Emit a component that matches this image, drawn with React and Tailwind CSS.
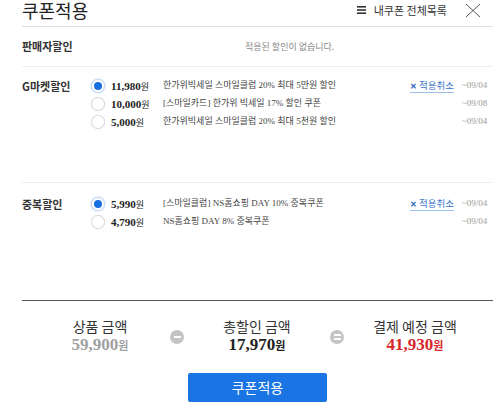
import React from "react";

const sans = "font-['Noto_Sans_CJK_KR','Noto_Sans',sans-serif]";
const serif = "font-['Liberation_Serif','Noto_Sans_CJK_KR',serif]";

const gmarket = [
  { price: "11,980", desc: "한가위빅세일 스마일클럽 20% 최대 5만원 할인", date: "~09/04", checked: true },
  { price: "10,000", desc: "[스마일카드] 한가위 빅세일 17% 할인 쿠폰", date: "~09/08" },
  { price: "5,000", desc: "한가위빅세일 스마일클럽 20% 최대 5천원 할인", date: "~09/04" },
];

const dup = [
  { price: "5,990", desc: "[스마일클럽] NS홈쇼핑 DAY 10% 중복쿠폰", date: "~09/04", checked: true },
  { price: "4,790", desc: "NS홈쇼핑 DAY 8% 중복쿠폰", date: "~09/04" },
];

const Radio = ({ checked }) =>
  checked ? (
    <span className="w-[14px] h-[14px] rounded-full border border-[#c6d6ee] bg-white flex items-center justify-center shadow-[0_0_2px_rgba(26,115,232,0.35)]">
      <span className="w-[8px] h-[8px] rounded-full bg-[#1a6fe0]" />
    </span>
  ) : (
    <span className="w-[14px] h-[14px] rounded-full border border-[#dcdcdc] bg-white shadow-[0_0_1px_rgba(0,0,0,0.15)]" />
  );

const CouponRow = ({ c }) => (
  <div className="flex items-center h-[18px]">
    <Radio checked={c.checked} />
    <span className={`${serif} ml-[6px] w-[52px] shrink-0 text-[11px] font-bold text-[#222] whitespace-nowrap`}>
      {c.price}
      <span className="text-[9px] font-normal">원</span>
    </span>
    <span className={`${serif} w-[247px] shrink-0 text-[9px] text-[#444] whitespace-nowrap`}>{c.desc}</span>
    <span className="w-[52px] shrink-0 flex">
      {c.checked && (
        <span className="text-[9.5px] text-[#3b74c8] border-b border-[#9cc0ec] leading-[13px] whitespace-nowrap flex items-center gap-[2px]">
          <span className="text-[8px] font-bold text-[#2c63c0]">✕</span>적용취소
        </span>
      )}
    </span>
    <span className={`${serif} text-[9px] text-[#999]`}>{c.date}</span>
  </div>
);

const Section = ({ title, list, className }) => (
  <div className={`flex ${className}`}>
    <div className="w-[69px] h-[18px] flex items-center text-[11px] font-bold text-[#333]">{title}</div>
    <div className="flex flex-col">
      {list.map((c, i) => (
        <CouponRow key={i} c={c} />
      ))}
    </div>
  </div>
);

const OpIcon = ({ type }) => (
  <span className="w-[14px] h-[14px] rounded-full bg-[#c4c4c4] flex flex-col items-center justify-center gap-[2px]">
    <span className="w-[7px] h-[2px] bg-white" />
    {type === "eq" && <span className="w-[7px] h-[2px] bg-white" />}
  </span>
);

const Sum = ({ label, value, color }) => (
  <div className="w-[120px] flex flex-col items-center">
    <span className="text-[14px] leading-[18px] text-[#333]">{label}</span>
    <span className={`${serif} text-[17px] leading-[20px] font-bold ${color}`}>
      {value}
      <span className="text-[11px]">원</span>
    </span>
  </div>
);

export default function App() {
  return (
    <div className={`${sans} w-[500px] h-[410px] bg-white overflow-hidden pl-[22px] pr-[7px]`}>
      <div className="h-[27px] border-b border-[#dedede]">
        <div className="h-[20px] flex items-center">
          <span className="text-[18px] leading-[20px] text-[#222]">쿠폰적용</span>
          <span className="ml-auto flex items-center text-[11px] text-[#333]">
            <svg width="9" height="8" viewBox="0 0 9 8" className="mr-[8px]">
              <rect x="0" y="0" width="9" height="1.6" fill="#333" />
              <rect x="0" y="3.2" width="9" height="1.6" fill="#333" />
              <rect x="0" y="6.4" width="9" height="1.6" fill="#333" />
            </svg>
            내쿠폰 전체목록
          </span>
          <svg width="16" height="15" viewBox="0 0 16 15" className="ml-[18px] mr-[12px]">
            <path d="M1 1 L15 14 M15 1 L1 14" stroke="#555" strokeWidth="1" fill="none" />
          </svg>
        </div>
      </div>
      <div className="h-[40px] border-b border-[#eeeeee] flex items-center">
        <span className="w-[223px] text-[11px] font-bold text-[#333]">판매자할인</span>
        <span className="text-[9px] text-[#888]">적용된 할인이 없습니다.</span>
      </div>
      <Section title="G마켓할인" list={gmarket} className="h-[116px] pt-[10px] border-b border-[#eeeeee]" />
      <Section title="중복할인" list={dup} className="h-[118px] pt-[12px] border-b border-[#555555]" />
      <div className="flex items-center pt-[16px] pl-[18px]">
        <Sum label="상품 금액" value="59,900" color="text-[#a0a0a0]" />
        <span className="ml-[10px]">
          <OpIcon type="minus" />
        </span>
        <span className="ml-[13px]">
          <Sum label="총할인 금액" value="17,970" color="text-[#222]" />
        </span>
        <span className="ml-[13px]">
          <OpIcon type="eq" />
        </span>
        <span className="ml-[11px]">
          <Sum label="결제 예정 금액" value="41,930" color="text-[#d8262b]" />
        </span>
      </div>
      <div className="flex justify-center mt-[17px]">
        <button className="w-[139px] h-[29px] rounded-[2px] bg-[#1a74e4] text-white text-[14px]">쿠폰적용</button>
      </div>
    </div>
  );
}
